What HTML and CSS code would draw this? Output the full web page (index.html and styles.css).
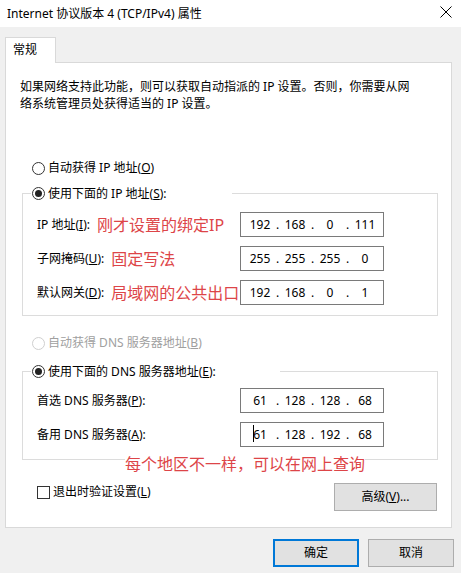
FILE: index.html
```html
<!DOCTYPE html>
<html lang="zh-CN">
<head>
<meta charset="utf-8">
<title>Internet 协议版本 4 (TCP/IPv4) 属性</title>
<link rel="stylesheet" href="styles.css">
</head>
<body>
<div class="titlebar">
  <span class="title">Internet 协议版本 4 (TCP/IPv4) 属性</span>
  <svg class="close" width="12" height="12" viewBox="0 0 12 12"><path d="M0.5 0.5 L11.5 11.5 M11.5 0.5 L0.5 11.5" stroke="#000" stroke-width="1" fill="none"/></svg>
</div>
<div class="content">
  <div class="tabs"><div class="tab">常规</div></div>
  <div class="panel">
    <p class="desc">如果网络支持此功能，则可以获取自动指派的 IP 设置。否则，你需要从网<br>络系统管理员处获得适当的 IP 设置。</p>
    <div class="radio-row first"><span class="radio"></span>自动获得 IP 地址(<u>O</u>)</div>
    <fieldset class="group ip-group">
      <legend class="legend-ip"><span class="legend-inner"><span class="radio checked"></span>使用下面的 IP 地址(<u>S</u>):</span></legend>
      <div class="rows">
        <div class="row">
          <div class="label">IP 地址(<u>I</u>):<span class="note">刚才设置的绑定IP</span></div>
          <div class="ip"><span class="seg">192</span><span class="dot">.</span><span class="seg">168</span><span class="dot">.</span><span class="seg">0</span><span class="dot">.</span><span class="seg">111</span></div>
        </div>
        <div class="row">
          <div class="label">子网掩码(<u>U</u>):<span class="note">固定写法</span></div>
          <div class="ip"><span class="seg">255</span><span class="dot">.</span><span class="seg">255</span><span class="dot">.</span><span class="seg">255</span><span class="dot">.</span><span class="seg">0</span></div>
        </div>
        <div class="row">
          <div class="label">默认网关(<u>D</u>):<span class="note">局域网的公共出口</span></div>
          <div class="ip"><span class="seg">192</span><span class="dot">.</span><span class="seg">168</span><span class="dot">.</span><span class="seg">0</span><span class="dot">.</span><span class="seg">1</span></div>
        </div>
      </div>
    </fieldset>
    <div class="radio-row disabled"><span class="radio"></span>自动获得 DNS 服务器地址(<u>B</u>)</div>
    <fieldset class="group dns-group">
      <legend class="legend-dns"><span class="legend-inner"><span class="radio checked"></span>使用下面的 DNS 服务器地址(<u>E</u>):</span></legend>
      <div class="rows">
        <div class="row">
          <div class="label">首选 DNS 服务器(<u>P</u>):</div>
          <div class="ip"><span class="seg">61</span><span class="dot">.</span><span class="seg">128</span><span class="dot">.</span><span class="seg">128</span><span class="dot">.</span><span class="seg">68</span></div>
        </div>
        <div class="row">
          <div class="label">备用 DNS 服务器(<u>A</u>):</div>
          <div class="ip"><span class="caret"></span><span class="seg">61</span><span class="dot">.</span><span class="seg">128</span><span class="dot">.</span><span class="seg">192</span><span class="dot">.</span><span class="seg">68</span></div>
        </div>
      </div>
    </fieldset>
    <div class="bottom">
      <div class="check"><span class="box"></span>退出时验证设置(<u>L</u>)</div>
      <div class="btn adv">高级(<u>V</u>)...</div>
    </div>
    <div class="region-note">每个地区不一样，可以在网上查询</div>
  </div>
  <div class="footer">
    <div class="btn ok">确定</div>
    <div class="btn">取消</div>
  </div>
</div>
</body>
</html>
```

FILE: styles.css
```css
* { box-sizing: border-box; }
html, body { margin: 0; padding: 0; }
body {
  width: 461px;
  height: 573px;
  background: #f0f0f0;
  font-family: "Noto Sans", "Noto Sans CJK SC", sans-serif;
  font-size: 12px;
  color: #000;
  overflow: hidden;
}
u { text-decoration-thickness: 1px; text-underline-offset: 1px; }

.titlebar {
  height: 27px;
  background: #fff;
  display: flex;
  align-items: center;
  justify-content: space-between;
  padding: 0 9px 0 7px;
}
.title { line-height: 16px; }
.close { margin-bottom: 3px; }

.content { padding: 10px 0 0 5px; }

.tab {
  width: 51px;
  height: 26px;
  background: #fff;
  border: 1px solid #d9d9d9;
  border-bottom: none;
  padding-left: 7px;
  line-height: 24px;
  position: relative;
  z-index: 1;
  margin-bottom: -1px;
}

.panel {
  position: relative;
  width: 447px;
  background: #fff;
  border: 1px solid #d9d9d9;
  padding: 15px 14px 16px 14px;
}

.desc { margin: 0; line-height: 17px; }

.radio-row {
  display: flex;
  align-items: center;
  height: 16px;
  line-height: 16px;
  margin-left: 12px;
}
.radio-row.first { margin-top: 48px; }
.radio-row.disabled { color: #a0a0a0; margin-top: 19px; }

.radio {
  width: 13px;
  height: 13px;
  border: 1px solid #333;
  border-radius: 50%;
  background: #fff;
  margin-right: 3px;
  display: flex;
  align-items: center;
  justify-content: center;
  flex: none;
}
.radio.checked::after {
  content: "";
  width: 7px;
  height: 7px;
  border-radius: 50%;
  background: #222;
}
.radio-row.disabled .radio { border-color: #cfcfcf; }

.group {
  margin: 10px 0 0 2px;
  width: 416px;
  border: 1px solid #dcdcdc;
  padding: 11px 0 10px 8px;
  min-width: 0;
}
.dns-group { margin-top: 13px; padding-top: 9px; padding-bottom: 12px; }
.group legend {
  padding: 0 0 0 1px;
  height: 15px;
  line-height: 15px;
}
.legend-ip { width: 201px; }
.legend-dns { width: 249px; }
.legend-inner { display: flex; align-items: center; height: 15px; }

.rows { display: flex; flex-direction: column; gap: 9px; }
.row {
  display: grid;
  grid-template-columns: 209px 144px;
  align-items: center;
  height: 25px;
}
.label {
  padding-left: 6px;
  display: flex;
  align-items: center;
  white-space: nowrap;
  line-height: 16px;
}
.note {
  color: #dd4548;
  font-size: 16px;
  line-height: 16px;
  margin-left: 7px;
}
.ip {
  position: relative;
  display: flex;
  align-items: center;
  height: 25px;
  border: 1px solid #7a7a7a;
  padding-left: 5px;
  background: #fff;
}
.seg { width: 28px; text-align: center; }
.dot { width: 7px; text-align: center; }
.caret {
  position: absolute;
  left: 12px;
  top: 2px;
  width: 1px;
  height: 17px;
  background: #000;
}

.bottom {
  display: flex;
  justify-content: space-between;
  align-items: flex-start;
  margin-top: 23px;
}
.check {
  display: flex;
  align-items: center;
  margin: 1px 0 0 17px;
  line-height: 16px;
}
.box {
  width: 13px;
  height: 13px;
  border: 1px solid #333;
  background: #fff;
  margin-right: 3px;
}
.btn {
  height: 28px;
  width: 86px;
  background: #e1e1e1;
  border: 1px solid #adadad;
  display: flex;
  align-items: center;
  justify-content: center;
  line-height: 16px;
}
.btn.adv { width: 103px; }
.btn.ok { border: 2px solid #0078d7; }

.region-note {
  position: absolute;
  left: 119px;
  top: 393px;
  color: #dd4548;
  font-size: 16px;
  line-height: 16px;
  background: #fff;
  white-space: nowrap;
}

.footer {
  display: flex;
  justify-content: flex-end;
  gap: 9px;
  padding: 11px 7px 0 0;
}
```
